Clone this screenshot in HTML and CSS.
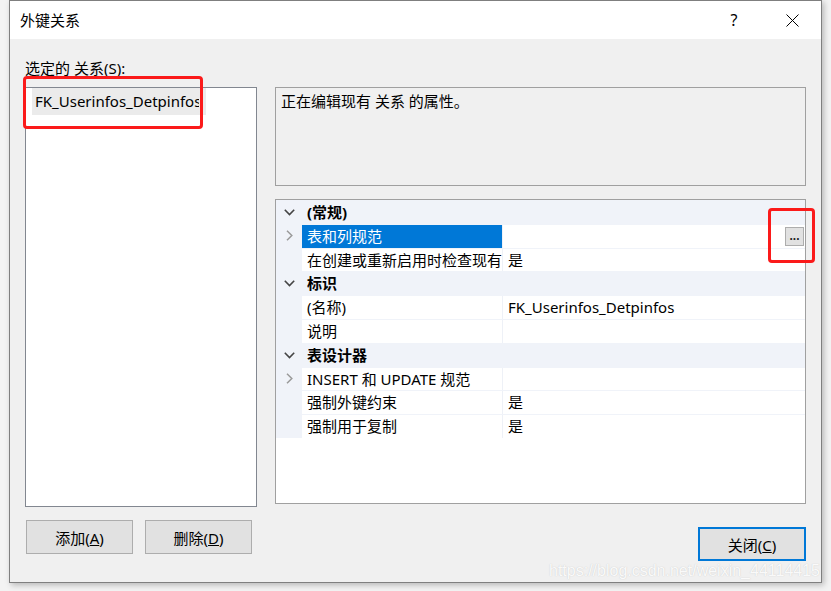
FILE: index.html
```html
<!DOCTYPE html>
<html lang="zh-CN">
<head>
<meta charset="UTF-8">
<title>外键关系</title>
<link rel="stylesheet" href="styles.css">
</head>
<body>
<div class="dialog">
    <div class="titlebar">
        <div class="title">外键关系</div>
        <div class="title-buttons">
            <div class="tb-btn">?</div>
            <div class="tb-btn">
                <svg width="13" height="13" viewBox="0 0 13 13"><path d="M0.5 0.5 L12.5 12.5 M12.5 0.5 L0.5 12.5" stroke="#000" stroke-width="1" fill="none"/></svg>
            </div>
        </div>
    </div>
    <div class="dialog-body">
        <div class="left-col">
            <div class="label">选定的 关系(S):</div>
            <div class="list">
                <div class="list-item"><span class="item-text">FK_Userinfos_Detpinfos</span></div>
            </div>
            <div class="left-buttons">
                <button class="btn">添加(<u>A</u>)</button>
                <button class="btn">删除(<u>D</u>)</button>
            </div>
        </div>
        <div class="right-col">
            <div class="description">正在编辑现有 关系 的属性。</div>
            <div class="propgrid">
                <div class="row category">
                    <div class="gutter"><svg width="11" height="7" viewBox="0 0 11 7"><path d="M0.8 0.8 L5.5 5.5 L10.2 0.8" stroke="#444" stroke-width="1.6" fill="none"/></svg></div>
                    <div class="cat-name">(常规)</div>
                </div>
                <div class="row">
                    <div class="gutter"><svg width="7" height="11" viewBox="0 0 7 11"><path d="M1 0.8 L5.8 5.5 L1 10.2" stroke="#9a9a9a" stroke-width="1.5" fill="none"/></svg></div>
                    <div class="name selected">表和列规范</div>
                    <div class="value"><span class="ellipsis-btn">...</span></div>
                </div>
                <div class="row">
                    <div class="gutter"></div>
                    <div class="name">在创建或重新启用时检查现有</div>
                    <div class="value">是</div>
                </div>
                <div class="row category">
                    <div class="gutter"><svg width="11" height="7" viewBox="0 0 11 7"><path d="M0.8 0.8 L5.5 5.5 L10.2 0.8" stroke="#444" stroke-width="1.6" fill="none"/></svg></div>
                    <div class="cat-name">标识</div>
                </div>
                <div class="row">
                    <div class="gutter"></div>
                    <div class="name">(名称)</div>
                    <div class="value">FK_Userinfos_Detpinfos</div>
                </div>
                <div class="row">
                    <div class="gutter"></div>
                    <div class="name">说明</div>
                    <div class="value"></div>
                </div>
                <div class="row category">
                    <div class="gutter"><svg width="11" height="7" viewBox="0 0 11 7"><path d="M0.8 0.8 L5.5 5.5 L10.2 0.8" stroke="#444" stroke-width="1.6" fill="none"/></svg></div>
                    <div class="cat-name">表设计器</div>
                </div>
                <div class="row">
                    <div class="gutter"><svg width="7" height="11" viewBox="0 0 7 11"><path d="M1 0.8 L5.8 5.5 L1 10.2" stroke="#9a9a9a" stroke-width="1.5" fill="none"/></svg></div>
                    <div class="name">INSERT 和 UPDATE 规范</div>
                    <div class="value"></div>
                </div>
                <div class="row">
                    <div class="gutter"></div>
                    <div class="name">强制外键约束</div>
                    <div class="value">是</div>
                </div>
                <div class="row">
                    <div class="gutter"></div>
                    <div class="name">强制用于复制</div>
                    <div class="value">是</div>
                </div>
            </div>
            <div class="right-buttons">
                <button class="btn btn-default">关闭(<u>C</u>)</button>
            </div>
        </div>
    </div>
</div>

<!-- annotations drawn over the screenshot -->
<div class="mark mark-list"></div>
<div class="mark mark-ellipsis"></div>
<div class="watermark">https://blog.csdn.net/weixin_44114415</div>
</body>
</html>
```

FILE: styles.css
```css
html, body {
    margin: 0;
    height: 100%;
}

body {
    font-family: "Noto Sans", "Noto Sans CJK SC", sans-serif;
    font-size: 15px;
    color: #000;
    background: #f3f3f3;
    padding-left: 9px;
    position: relative;
    overflow: hidden;
}

.dialog {
    box-sizing: border-box;
    width: 813px;
    height: 583px;
    border: 1px solid #7f7f7f;
    background: #f0f0f0;
    box-shadow: 2px 2px 6px rgba(0,0,0,0.25);
    display: flex;
    flex-direction: column;
}

.titlebar {
    height: 38px;
    background: #fff;
    display: flex;
    justify-content: space-between;
    align-items: center;
    flex-shrink: 0;
}

.title {
    padding-left: 10px;
    line-height: 20px;
}

.title-buttons {
    display: flex;
    height: 100%;
}

.tb-btn {
    width: 58px;
    height: 100%;
    display: flex;
    align-items: center;
    justify-content: center;
    font-size: 16px;
}

.dialog-body {
    flex: 1;
    display: flex;
    padding: 19px 15px 0 15px;
}

.left-col {
    width: 232px;
    margin-right: 18px;
}

.label {
    line-height: 20px;
    height: 20px;
    margin-bottom: 9px;
}

.list {
    box-sizing: border-box;
    height: 420px;
    background: #fff;
    border: 1px solid #828790;
}

.list-item {
    width: 171px;
    height: 27px;
    margin-left: 6px;
    padding-left: 3px;
    background: #ebebeb;
}

.item-text {
    display: block;
    width: 164px;
    line-height: 27px;
    white-space: nowrap;
    overflow: hidden;
}

.left-buttons {
    display: flex;
    gap: 12px;
    margin-top: 13px;
    padding-left: 1px;
}

.btn {
    box-sizing: border-box;
    width: 107px;
    height: 34px;
    background: #e1e1e1;
    border: 1px solid #adadad;
    font-family: inherit;
    font-size: 15px;
    color: #000;
    padding: 0;
}

.btn-default {
    width: 108px;
    border: 2px solid #0078d7;
}

.right-col {
    flex: 1;
    padding-top: 29px;
}

.description {
    box-sizing: border-box;
    height: 99px;
    border: 1px solid #a0a0a0;
    background: #f0f0f0;
    padding: 3px 5px;
    line-height: 20px;
}

.propgrid {
    box-sizing: border-box;
    height: 305px;
    margin-top: 13px;
    border: 1px solid #a0a0a0;
    background: #fff;
}

.row {
    display: grid;
    grid-template-columns: 26px 200px 1fr;
    height: 23.8px;
    background: #f0f3f9;
}

.row .name, .row .value {
    background: #fff;
    margin-top: 1px;
    line-height: 23.8px;
    padding-left: 5px;
    white-space: nowrap;
    overflow: hidden;
}

.row .value {
    border-left: 1px solid #eef1f7;
    position: relative;
}

.row .name.selected {
    background: #0078d7;
    color: #fff;
}

.gutter {
    display: flex;
    align-items: center;
    justify-content: center;
}

.category .cat-name {
    grid-column: 2 / 4;
    font-weight: bold;
    line-height: 25px;
    padding-left: 5px;
}

.ellipsis-btn {
    position: absolute;
    right: 1px;
    top: 2px;
    box-sizing: border-box;
    width: 19px;
    height: 19px;
    background: #e1e1e1;
    border: 1px solid #adadad;
    font-family: "Liberation Sans", Arial, sans-serif;
    font-size: 12px;
    font-weight: bold;
    line-height: 17px;
    text-align: center;
    letter-spacing: 0;
    color: #222;
}

.right-buttons {
    display: flex;
    justify-content: flex-end;
    margin-top: 23px;
}

.mark {
    position: absolute;
    border: 3px solid #fb1a1a;
    border-radius: 4px;
}

.mark-list {
    left: 23px;
    top: 76px;
    width: 174px;
    height: 47px;
}

.mark-ellipsis {
    left: 768px;
    top: 208px;
    width: 41px;
    height: 49px;
}

.watermark {
    position: absolute;
    left: 549px;
    top: 562px;
    font-family: "Liberation Sans", Arial, sans-serif;
    font-size: 16px;
    color: rgba(255,255,255,0.92);
    text-shadow: 0 0 1px rgba(150,150,150,0.5);
    white-space: nowrap;
}
```
